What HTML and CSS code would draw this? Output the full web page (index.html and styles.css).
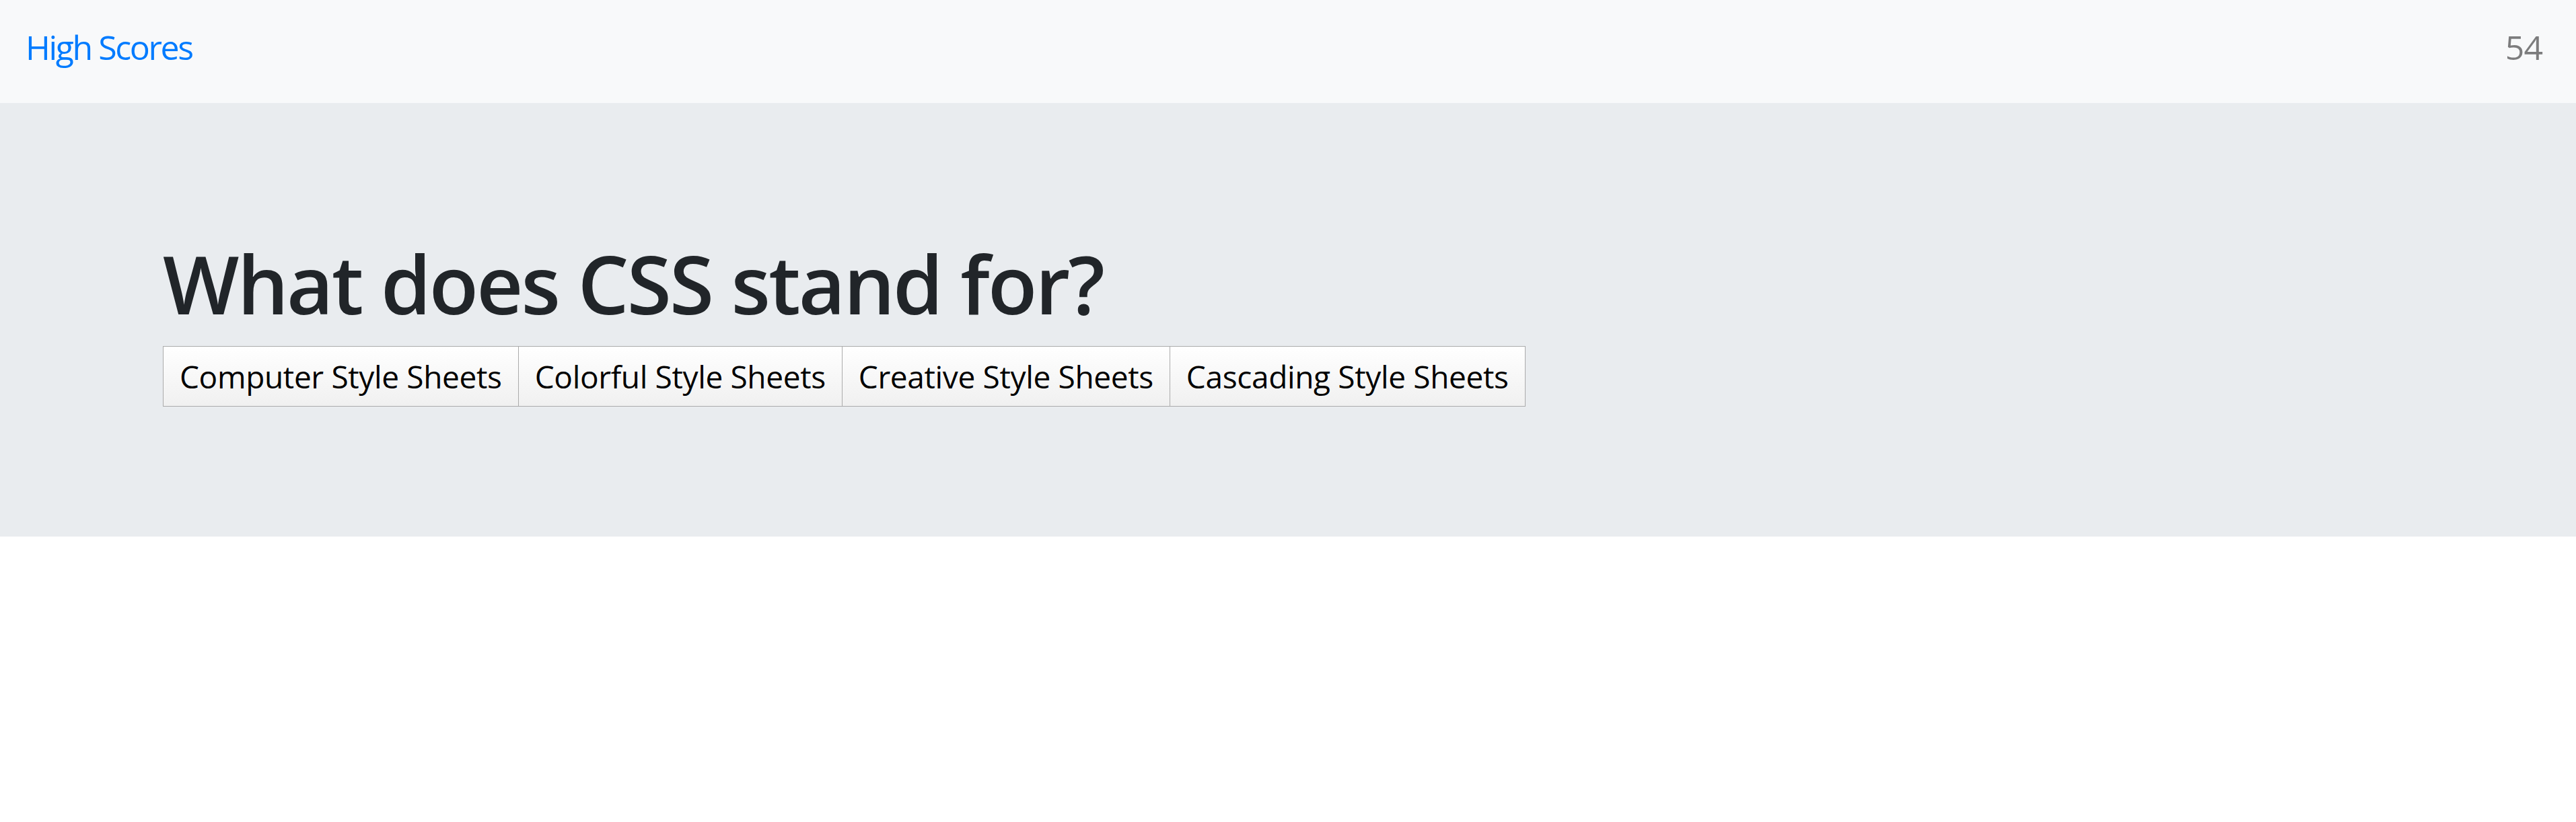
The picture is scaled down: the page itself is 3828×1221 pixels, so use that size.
FILE: index.html
```html
<!DOCTYPE html>
<html lang="en">
<head>
<meta charset="utf-8">
<title>Quiz</title>
<link rel="stylesheet" href="styles.css">
</head>
<body>
<nav class="navbar">
  <a class="brand" href="#">High Scores</a>
  <span class="score">54</span>
</nav>
<section class="jumbotron">
  <h1 class="question">What does CSS stand for?</h1>
  <div class="answers">
    <button class="answer">Computer Style Sheets</button>
    <button class="answer">Colorful Style Sheets</button>
    <button class="answer">Creative Style Sheets</button>
    <button class="answer">Cascading Style Sheets</button>
  </div>
</section>
</body>
</html>
```

FILE: styles.css
```css
html, body {
  margin: 0;
  padding: 0;
  background: #ffffff;
  font-family: "Open Sans", "Noto Sans", sans-serif;
}

.navbar {
  box-sizing: border-box;
  height: 153px;
  padding: 33px 50px 0 38px;
  background: #f8f9fa;
  display: flex;
  justify-content: space-between;
  align-items: flex-start;
}

.brand {
  font-size: 50px;
  line-height: 1.5;
  letter-spacing: -2.4px;
  color: #007bff;
  text-decoration: none;
}

.score {
  font-size: 50px;
  line-height: 1.5;
  letter-spacing: -1px;
  color: rgba(0, 0, 0, 0.5);
}

.jumbotron {
  box-sizing: border-box;
  height: 644px;
  padding: 196px 242px 0 242px;
  background: #e9ecef;
}

.question {
  margin: 0 0 21px 0;
  font-size: 120px;
  line-height: 1.2;
  font-weight: 600;
  letter-spacing: -2.8px;
  color: #212529;
}

.answers {
  display: flex;
}

.answer {
  box-sizing: border-box;
  height: 90px;
  padding: 0 24px;
  margin: 0;
  font-family: "Open Sans", "Noto Sans", sans-serif;
  font-size: 46px;
  letter-spacing: -0.35px;
  color: #000000;
  border: 1px solid #ababab;
  background: linear-gradient(#ffffff, #f0f0f0);
  border-radius: 0;
}

.answer + .answer {
  margin-left: -1px;
}
```
